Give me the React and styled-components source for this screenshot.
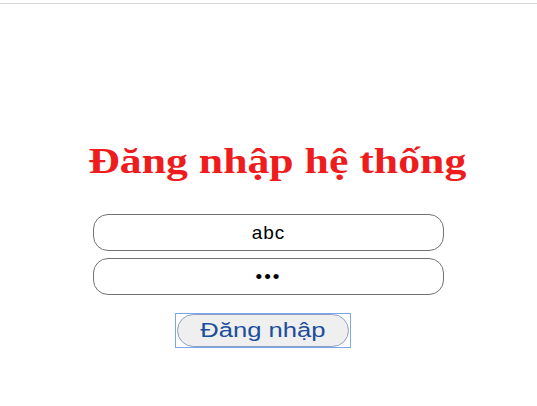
import React from "react";
import styled, { createGlobalStyle } from "styled-components";

const Global = createGlobalStyle`
  html, body { margin: 0; padding: 0; background: #fff; }
  body { font-family: "Liberation Sans", Arial, sans-serif; }
`;

const Page = styled.div`
  width: 537px;
  height: 406px;
  display: flex;
  flex-direction: column;
  align-items: center;
`;

const TopRule = styled.div`
  align-self: stretch;
  margin-top: 3px;
  height: 1px;
  background: #d8d8d8;
`;

const Title = styled.h1`
  margin: 138px 0 0 17px;
  font-family: "Liberation Serif", "Times New Roman", serif;
  font-weight: bold;
  font-size: 35px;
  line-height: 40px;
  color: #ee1c1c;
  text-align: center;
  white-space: nowrap;
  transform: scaleX(1.25);
`;

const Form = styled.form`
  margin-top: 32px;
  display: flex;
  flex-direction: column;
  align-items: center;
  gap: 7px;
`;

const Field = styled.input`
  box-sizing: border-box;
  width: 351px;
  height: 37px;
  border: 1px solid #727272;
  border-radius: 15px;
  text-align: center;
  font-family: "Liberation Sans", Arial, sans-serif;
  font-size: 19px;
  letter-spacing: ${(p) => (p.type === "password" ? "2px" : "1px")};
  color: #000;
  background: #fff;
  outline: none;
  padding: 0;
`;

const FocusRing = styled.span`
  margin-top: 11px;
  margin-right: 11px;
  display: inline-flex;
  border: 1px solid #7ba6ee;
  padding: 0 1px;
`;

const Submit = styled.button`
  box-sizing: border-box;
  width: 172px;
  height: 33px;
  border: 1px solid #8d9fc4;
  border-radius: 17px;
  background: #efefef;
  color: #1b4e9b;
  font-family: "Liberation Sans", Arial, sans-serif;
  font-size: 20px;
  outline: none;
  padding: 0;
  display: flex;
  align-items: center;
  justify-content: center;
`;

const Label = styled.span`
  display: inline-block;
  white-space: nowrap;
  transform: scaleX(1.28);
`;

export default function App() {
  return (
    <>
      <Global />
      <Page>
        <TopRule />
        <Title>Đăng nhập hệ thống</Title>
        <Form onSubmit={(e) => e.preventDefault()}>
          <Field type="text" defaultValue="abc" />
          <Field type="password" defaultValue="abc" />
          <FocusRing>
            <Submit type="submit">
              <Label>Đăng nhập</Label>
            </Submit>
          </FocusRing>
        </Form>
      </Page>
    </>
  );
}
